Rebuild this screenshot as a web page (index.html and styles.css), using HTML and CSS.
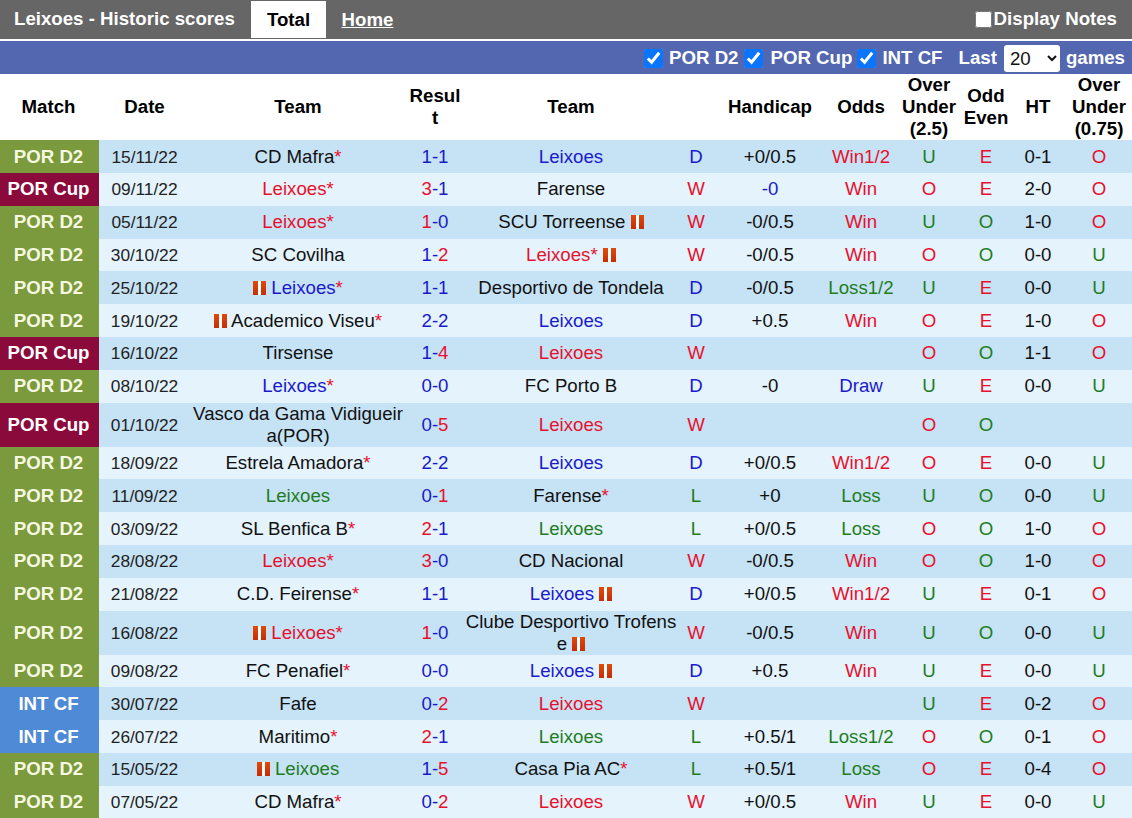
FILE: index.html
```html
<!DOCTYPE html>
<html lang="en">
<head>
<meta charset="utf-8">
<title>Leixoes - Historic scores</title>
<link rel="stylesheet" href="styles.css">
</head>
<body>
<div class="topbar">
  <div class="title">Leixoes - Historic scores</div>
  <div class="tab active">Total</div>
  <a class="tab link" href="#">Home</a>
  <label class="notes"><input type="checkbox" class="notes-check">Display Notes</label>
</div>
<div class="filter">
  <label class="f"><input type="checkbox" checked>POR D2</label>
  <label class="f f-cup"><input type="checkbox" checked>POR Cup</label>
  <label class="f"><input type="checkbox" checked>INT CF</label>
  <span class="last">Last</span>
  <select class="sel"><option>20</option></select>
  <span class="games">games</span>
</div>
<table class="tbl">
<colgroup>
<col class="c1"><col class="c2"><col class="c3"><col class="c4"><col class="c5"><col class="c6"><col class="c7"><col class="c8"><col class="c9"><col class="c10"><col class="c11"><col class="c12">
</colgroup>
<thead>
<tr><th class="th-match">Match</th><th>Date</th><th>Team</th><th>Result</th><th>Team</th><th></th><th>Handicap</th><th>Odds</th><th>Over Under (2.5)</th><th>Odd Even</th><th>HT</th><th>Over Under (0.75)</th></tr>
</thead>
<tbody>
<tr><td class="lg d2">POR D2</td><td class="dt">15/11/22</td><td>CD Mafra<i>*</i></td><td><b>1-1</b></td><td class="bl">Leixoes</td><td class="bl">D</td><td>+0/0.5</td><td class="r">Win1/2</td><td class="g">U</td><td class="r">E</td><td>0-1</td><td class="r">O</td></tr>
<tr><td class="lg cup">POR Cup</td><td class="dt">09/11/22</td><td class="r">Leixoes<i>*</i></td><td><b><i>3</i>-1</b></td><td>Farense</td><td class="r">W</td><td class="bl">-0</td><td class="r">Win</td><td class="r">O</td><td class="r">E</td><td>2-0</td><td class="r">O</td></tr>
<tr><td class="lg d2">POR D2</td><td class="dt">05/11/22</td><td class="r">Leixoes<i>*</i></td><td><b><i>1</i>-0</b></td><td>SCU Torreense <span class="flag"></span></td><td class="r">W</td><td>-0/0.5</td><td class="r">Win</td><td class="g">U</td><td class="g">O</td><td>1-0</td><td class="r">O</td></tr>
<tr><td class="lg d2">POR D2</td><td class="dt">30/10/22</td><td>SC Covilha</td><td><b>1-<i>2</i></b></td><td class="r">Leixoes<i>*</i> <span class="flag"></span></td><td class="r">W</td><td>-0/0.5</td><td class="r">Win</td><td class="r">O</td><td class="g">O</td><td>0-0</td><td class="g">U</td></tr>
<tr><td class="lg d2">POR D2</td><td class="dt">25/10/22</td><td class="bl"><span class="flag"></span> Leixoes<i>*</i></td><td><b>1-1</b></td><td>Desportivo de Tondela</td><td class="bl">D</td><td>-0/0.5</td><td class="g">Loss1/2</td><td class="g">U</td><td class="r">E</td><td>0-0</td><td class="g">U</td></tr>
<tr><td class="lg d2">POR D2</td><td class="dt">19/10/22</td><td><span class="flag"></span> Academico Viseu<i>*</i></td><td><b>2-2</b></td><td class="bl">Leixoes</td><td class="bl">D</td><td>+0.5</td><td class="r">Win</td><td class="r">O</td><td class="r">E</td><td>1-0</td><td class="r">O</td></tr>
<tr><td class="lg cup">POR Cup</td><td class="dt">16/10/22</td><td>Tirsense</td><td><b>1-<i>4</i></b></td><td class="r">Leixoes</td><td class="r">W</td><td></td><td></td><td class="r">O</td><td class="g">O</td><td>1-1</td><td class="r">O</td></tr>
<tr><td class="lg d2">POR D2</td><td class="dt">08/10/22</td><td class="bl">Leixoes<i>*</i></td><td><b>0-0</b></td><td>FC Porto B</td><td class="bl">D</td><td>-0</td><td class="bl">Draw</td><td class="g">U</td><td class="r">E</td><td>0-0</td><td class="g">U</td></tr>
<tr class="tall"><td class="lg cup">POR Cup</td><td class="dt">01/10/22</td><td>Vasco da Gama Vidigueira(POR)</td><td><b>0-<i>5</i></b></td><td class="r">Leixoes</td><td class="r">W</td><td></td><td></td><td class="r">O</td><td class="g">O</td><td></td><td></td></tr>
<tr><td class="lg d2">POR D2</td><td class="dt">18/09/22</td><td>Estrela Amadora<i>*</i></td><td><b>2-2</b></td><td class="bl">Leixoes</td><td class="bl">D</td><td>+0/0.5</td><td class="r">Win1/2</td><td class="r">O</td><td class="r">E</td><td>0-0</td><td class="g">U</td></tr>
<tr><td class="lg d2">POR D2</td><td class="dt">11/09/22</td><td class="g">Leixoes</td><td><b>0-<i>1</i></b></td><td>Farense<i>*</i></td><td class="g">L</td><td>+0</td><td class="g">Loss</td><td class="g">U</td><td class="g">O</td><td>0-0</td><td class="g">U</td></tr>
<tr><td class="lg d2">POR D2</td><td class="dt">03/09/22</td><td>SL Benfica B<i>*</i></td><td><b><i>2</i>-1</b></td><td class="g">Leixoes</td><td class="g">L</td><td>+0/0.5</td><td class="g">Loss</td><td class="r">O</td><td class="g">O</td><td>1-0</td><td class="r">O</td></tr>
<tr><td class="lg d2">POR D2</td><td class="dt">28/08/22</td><td class="r">Leixoes<i>*</i></td><td><b><i>3</i>-0</b></td><td>CD Nacional</td><td class="r">W</td><td>-0/0.5</td><td class="r">Win</td><td class="r">O</td><td class="g">O</td><td>1-0</td><td class="r">O</td></tr>
<tr><td class="lg d2">POR D2</td><td class="dt">21/08/22</td><td>C.D. Feirense<i>*</i></td><td><b>1-1</b></td><td class="bl">Leixoes <span class="flag"></span></td><td class="bl">D</td><td>+0/0.5</td><td class="r">Win1/2</td><td class="g">U</td><td class="r">E</td><td>0-1</td><td class="r">O</td></tr>
<tr class="tall"><td class="lg d2">POR D2</td><td class="dt">16/08/22</td><td class="r"><span class="flag"></span> Leixoes<i>*</i></td><td><b><i>1</i>-0</b></td><td>Clube Desportivo Trofense <span class="flag"></span></td><td class="r">W</td><td>-0/0.5</td><td class="r">Win</td><td class="g">U</td><td class="g">O</td><td>0-0</td><td class="g">U</td></tr>
<tr><td class="lg d2">POR D2</td><td class="dt">09/08/22</td><td>FC Penafiel<i>*</i></td><td><b>0-0</b></td><td class="bl">Leixoes <span class="flag"></span></td><td class="bl">D</td><td>+0.5</td><td class="r">Win</td><td class="g">U</td><td class="r">E</td><td>0-0</td><td class="g">U</td></tr>
<tr><td class="lg int">INT CF</td><td class="dt">30/07/22</td><td>Fafe</td><td><b>0-<i>2</i></b></td><td class="r">Leixoes</td><td class="r">W</td><td></td><td></td><td class="g">U</td><td class="r">E</td><td>0-2</td><td class="r">O</td></tr>
<tr><td class="lg int">INT CF</td><td class="dt">26/07/22</td><td>Maritimo<i>*</i></td><td><b><i>2</i>-1</b></td><td class="g">Leixoes</td><td class="g">L</td><td>+0.5/1</td><td class="g">Loss1/2</td><td class="r">O</td><td class="g">O</td><td>0-1</td><td class="r">O</td></tr>
<tr><td class="lg d2">POR D2</td><td class="dt">15/05/22</td><td class="g"><span class="flag"></span> Leixoes</td><td><b>1-<i>5</i></b></td><td>Casa Pia AC<i>*</i></td><td class="g">L</td><td>+0.5/1</td><td class="g">Loss</td><td class="r">O</td><td class="r">E</td><td>0-4</td><td class="r">O</td></tr>
<tr><td class="lg d2">POR D2</td><td class="dt">07/05/22</td><td>CD Mafra<i>*</i></td><td><b>0-<i>2</i></b></td><td class="r">Leixoes</td><td class="r">W</td><td>+0/0.5</td><td class="r">Win</td><td class="g">U</td><td class="r">E</td><td>0-0</td><td class="g">U</td></tr>
</tbody>
</table>
</body>
</html>
```
FILE: styles.css
```css
* { box-sizing: border-box; }
html, body { margin: 0; padding: 0; background: #fff; overflow: hidden; }
body { font-family: "Liberation Sans", Arial, sans-serif; font-size: 18.67px; color: #111; width: 1132px; height: 818px; }

.topbar { display: flex; align-items: flex-end; height: 39px; background: #666; color: #fff; font-weight: bold; font-size: 18.67px; padding: 0 0 1px 14px; }
.title { width: 237px; align-self: center; }
.tab { width: 75px; height: 37px; display: flex; align-items: center; justify-content: center; }
.tab.active { background: #fff; color: #000; }
.tab.link { color: #fff; text-decoration: underline; margin-left: 4px; }
.notes { margin-left: auto; align-self: center; display: flex; align-items: center; padding-right: 15px; }
.notes-check { width: 17px; height: 17px; margin: 1px 2px 0 0; }

.filter { margin-top: 2px; height: 33px; background: #5267b0; color: #fff; font-weight: bold; font-size: 18.67px; display: flex; align-items: center; justify-content: flex-end; padding-right: 7px; }
.f { display: flex; align-items: center; margin-right: 5px; }
.f input { width: 19px; height: 19px; margin: 2px 6px 0 0; accent-color: #0a75ff; }
.f-cup input { margin-right: 8px; }
.last { margin-left: 11px; }
.sel { width: 56px; height: 27px; margin: 2px 6px 0 7px; font-family: "Liberation Sans", Arial, sans-serif; font-size: 18.67px; color: #111; background-color: #fff; border: 0; border-radius: 3px; padding-left: 2px; }

.tbl { width: 1132px; table-layout: fixed; border-collapse: collapse; border-spacing: 0; }
.c1 { width: 99px; } .c2 { width: 91px; } .c3 { width: 216px; } .c4 { width: 58px; } .c5 { width: 214px; } .c6 { width: 36px; }
.c7 { width: 112px; } .c8 { width: 70px; } .c9 { width: 66px; } .c10 { width: 48px; } .c11 { width: 56px; } .c12 { width: 66px; }

.tbl th { height: 66.2px; padding: 0 1px; font-size: 18.67px; line-height: 22px; font-weight: bold; color: #000; text-align: center; overflow-wrap: anywhere; }
.tbl th.th-match { padding-right: 3px; }
.tbl td { padding: 0 1px; text-align: center; font-size: 18.67px; line-height: 22px; height: 32.8px; word-break: break-all; }
.tbl tbody tr:nth-child(odd) td { background: #c6e2f5; }
.tbl tbody tr:nth-child(even) td { background: #e4f3fc; }
.tbl tr.tall td { height: 44px; }
.tbl td.lg { color: #fff; font-weight: bold; word-break: normal; padding-right: 3px; }
.tbl tbody tr td.d2 { background: #7a9a3d; color: #f6f8e0; }
.tbl tbody tr td.cup { background: #8b0a3c; }
.tbl tbody tr td.int { background: #4f8ad6; }
.tbl td.dt { font-size: 17.33px; color: #222; }

.r { color: #e8112d; }
.bl { color: #1a1acc; }
.g { color: #1e7d1e; }
td i { font-style: normal; color: #e8112d; }
td b { font-weight: normal; color: #1a1acc; }

.flag { display: inline-block; width: 13px; height: 14px; vertical-align: -1px; background: linear-gradient(90deg, transparent 0 5px, #fff 5.5px 7.5px, transparent 8px), linear-gradient(#e04a0c, #c42e06); }
```
